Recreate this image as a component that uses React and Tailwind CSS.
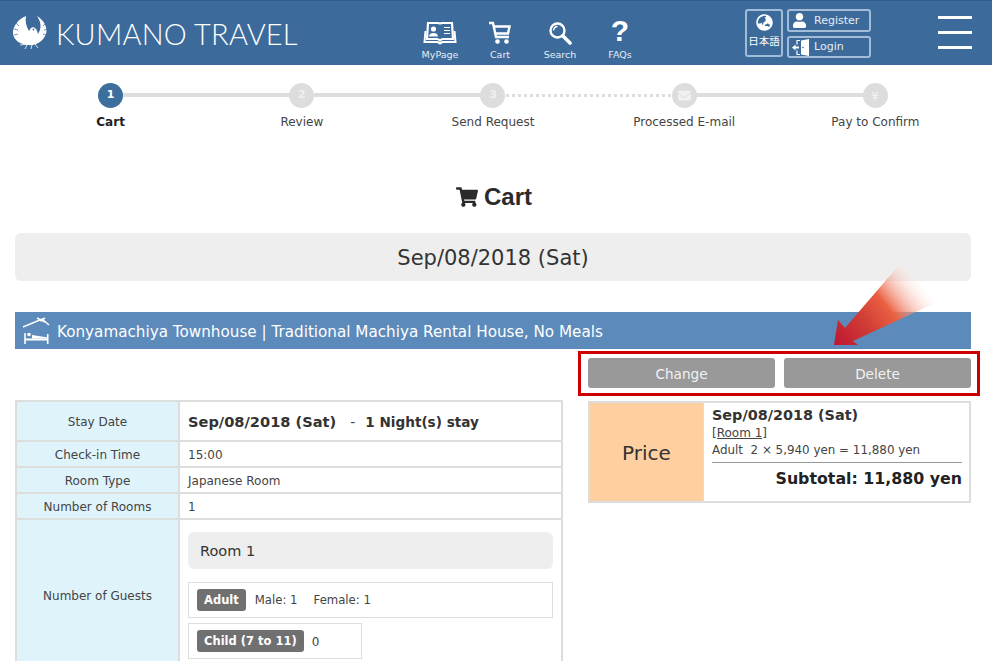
import React from 'react'
import { FaShoppingCart, FaEnvelope, FaYenSign, FaUser, FaGlobeAsia } from 'react-icons/fa'

function PhoenixLogo() {
  return (
    <svg width="36" height="36" viewBox="0 0 36 36" className="shrink-0">
      <path fill="#fff" d="M13 1C6 4 0 10 0 18C0 25 8 30 15 30C22 31 30 27 33 19C35 13 31 5 24 1C28 7 29 13 25 19C24 14 21 11 18 13L16 16C13 11 12 6 13 1z" />
      <path stroke="#3c6a9b" strokeWidth="0.7" fill="none" d="M3 8l3 3M1 14l4 1M1 20l4-1M33 8l-3 3M35 14l-4 1M34 20l-4-1" />
      <circle cx="20.500" cy="14.500" r="0.900" fill="#3c6a9b" />
      <path stroke="#fff" strokeWidth="0.800" fill="none" d="M7 30l8-1M14 30l-2 4M19 30l-1 4M22 29l3 4" />
    </svg>
  )
}

function BookIcon() {
  return (
    <svg width="34" height="24" viewBox="0 0 34 24">
      <path fill="none" stroke="#fff" strokeWidth="2.200" d="M5 2h10c1 0 2 .5 2 1.500c0-1 1-1.500 2-1.500h10l1 16H20c-1.500 0-2.500 1-3 1.500c-.5-.5-1.500-1.500-3-1.500H4z" />
      <path fill="none" stroke="#fff" strokeWidth="2" d="M2.500 10L1.500 21H14c1.500 0 2 1 3 1.500c1-.5 1.500-1.500 3-1.500h12.500L31.500 10" />
      <circle cx="10.500" cy="8" r="2.600" fill="#fff" />
      <path fill="#fff" d="M6 15.500c0-2.500 2-3.500 4.500-3.500s4.500 1 4.500 3.500z" />
      <path stroke="#fff" strokeWidth="1.200" d="M21 6.500h6M21 9.500h6M21 12.500h6" />
    </svg>
  )
}

function CartIcon() {
  return (
    <svg width="24" height="24" viewBox="0 0 24 24" fill="none">
      <path stroke="#fff" strokeWidth="2.400" d="M1 2h4l3 14h13" />
      <path stroke="#fff" strokeWidth="2.400" d="M6 5.500h15.500l-1.500 7H8" />
      <circle cx="9.500" cy="20.500" r="2.300" fill="#fff" />
      <circle cx="18.500" cy="20.500" r="2.300" fill="#fff" />
    </svg>
  )
}

function SearchIcon() {
  return (
    <svg width="24" height="24" viewBox="0 0 24 24" fill="none">
      <circle cx="9.500" cy="9.500" r="7" stroke="#fff" strokeWidth="2.400" />
      <path stroke="#fff" strokeWidth="1.500" d="M5.500 9.500a4 4 0 0 1 4-4" />
      <path stroke="#fff" strokeWidth="3.600" strokeLinecap="round" d="M15.500 15.500L22 22" />
    </svg>
  )
}

function NavItem({ icon, label }) {
  return (
    <div className="w-[60px] flex flex-col items-center text-white">
      <div className="h-[28px] flex items-end justify-center">{icon}</div>
      <span className="mt-[4px] text-[9.500px] leading-[11px] text-[#e6edf5]">{label}</span>
    </div>
  )
}

function DoorIcon() {
  return (
    <svg width="18" height="17" viewBox="0 0 18 17" fill="none">
      <path fill="#fff" d="M9 1.500L17 0v17l-8-1.500z" />
      <path stroke="#fff" strokeWidth="1.200" d="M8 1.500H5v4M5 11.500v4h3" />
      <path fill="#fff" d="M0 8.500l3.500-3v2H7v2H3.500v2z" />
      <circle cx="11" cy="8.500" r=".8" fill="#3c6a9b" />
    </svg>
  )
}

function Header() {
  return (
    <header className="h-[65px] bg-[#3c6a9b] border-t border-[#2f5c8c] flex items-center text-white">
      <div className="w-[405px] flex items-center pl-[13px]">
        <PhoenixLogo />
        <span className="ml-[7px] text-[29px] leading-none font-light tracking-[0.2px] whitespace-nowrap font-['Lato',sans-serif]">KUMANO TRAVEL</span>
      </div>
      <nav className="flex mt-[10px] ml-[5px]">
        <NavItem icon={<BookIcon />} label="MyPage" />
        <NavItem icon={<CartIcon />} label="Cart" />
        <NavItem icon={<SearchIcon />} label="Search" />
        <NavItem icon={<span className="text-[30px] leading-[28px] font-bold font-['Liberation_Sans',sans-serif]">?</span>} label="FAQs" />
      </nav>
      <div className="ml-[95px] flex gap-[4px] mt-[1px]">
        <div className="w-[38px] h-[48px] border-2 border-[#a3bdd8] rounded-[3px] flex flex-col items-center pt-[3px]">
          <FaGlobeAsia size={17} />
          <span className="mt-[3px] text-[10.500px] leading-[13px] font-['Noto_Sans_CJK_JP',sans-serif]">日本語</span>
        </div>
        <div className="w-[84px] flex flex-col gap-[4px]">
          <div className="h-[23px] border-2 border-[#a3bdd8] rounded-[3px] flex items-center pl-[3px] gap-[7px] text-[11px]">
            <FaUser size={15} /> <span className="pt-[2px] text-[#e6edf5]">Register</span>
          </div>
          <div className="h-[22px] border-2 border-[#a3bdd8] rounded-[3px] flex items-center pl-[3px] gap-[4px] text-[11px]">
            <DoorIcon /> <span className="pt-[1px] text-[#e6edf5]">Login</span>
          </div>
        </div>
      </div>
      <div className="ml-[67px] mb-[2px] w-[34px] flex flex-col gap-[12px]">
        <div className="h-[3px] bg-white" />
        <div className="h-[3px] bg-white" />
        <div className="h-[3px] bg-white" />
      </div>
    </header>
  )
}

const steps = [
  { label: 'Cart', mark: '1', active: true },
  { label: 'Review', mark: '2' },
  { label: 'Send Request', mark: '3', dotted: true },
  { label: 'Processed E-mail', mark: <FaEnvelope size={13} /> },
  { label: 'Pay to Confirm', mark: <FaYenSign size={10} />, last: true },
]

function Stepper() {
  return (
    <div className="grid grid-cols-5 ml-[15px] mr-[21px] pt-[18px] h-[100px]">
      {steps.map(s => (
        <div key={s.label} className="relative flex flex-col items-center">
          {!s.last && (s.dotted
            ? <div className="absolute top-[11px] left-1/2 w-full border-t-[3px] border-dotted border-[#dddddd]" />
            : <div className="absolute top-[10px] left-1/2 w-full h-[4px] bg-[#dddddd]" />)}
          <div className={`relative z-10 w-[25px] h-[25px] rounded-full flex items-center justify-center text-[11px] font-bold ${s.active ? 'bg-[#3c6f9e] text-white' : 'bg-[#dddddd] text-[#f0f0f0]'}`}>
            {s.mark}
          </div>
          <span className={`mt-[6px] text-[12px] leading-[16px] ${s.active ? 'font-bold text-[#222]' : 'text-[#444]'}`}>{s.label}</span>
        </div>
      ))}
    </div>
  )
}

function HouseIcon() {
  return (
    <svg width="28" height="30" viewBox="7 3 28 30" fill="none" className="shrink-0">
      <path stroke="#fff" strokeWidth="1.500" d="M8 14L27 6L34 12M22 5L30 9M30 5L25 8" />
      <path stroke="#fff" strokeWidth="1.600" d="M10 20V31M32.700 21V31" />
      <path fill="#fff" d="M10 25.500h22.700v2H10z" />
      <circle cx="14" cy="21.500" r="1.800" fill="#fff" />
      <path fill="#fff" d="M17 22l16 2.500v1H17z" />
    </svg>
  )
}

function Row({ label, children, big }) {
  return (
    <tr>
      <th className={`w-[163px] border-2 border-[#dddddd] bg-[#dff3fb] font-normal text-[12px] text-[#444] text-center align-middle ${big ? 'pt-[2px]' : 'pt-[1px]'}`}>{label}</th>
      <td className={`border-2 border-[#dddddd] px-[8px] text-[12px] text-[#444] align-middle ${big ? 'h-[40px] pt-[2px]' : 'h-[26px] pt-[1px]'}`}>{children}</td>
    </tr>
  )
}

function GuestBox({ tag, children, className }) {
  return (
    <div className={`border border-[#dddddd] h-[36px] flex items-center px-[8px] ${className}`}>
      <span className="bg-[#707070] rounded-[3px] text-white font-bold text-[11.500px] leading-[22px] px-[7px] whitespace-nowrap">{tag}</span>
      {children}
    </div>
  )
}

function StayTable() {
  return (
    <table className="w-[548px] border-collapse table-fixed">
      <tbody>
        <Row label="Stay Date" big>
          <span className="font-bold text-[14.600px] text-[#333] whitespace-nowrap">Sep/08/2018 (Sat)</span>
          <span className="ml-[14px] text-[14px]">-</span>
          <span className="ml-[10px] font-bold text-[13.600px] text-[#333] whitespace-nowrap">1 Night(s) stay</span>
        </Row>
        <Row label="Check-in Time">15:00</Row>
        <Row label="Room Type">Japanese Room</Row>
        <Row label="Number of Rooms">1</Row>
        <Row label="Number of Guests">
          <div className="pt-[11px] pb-[12px]">
            <div className="h-[37px] bg-[#eeeeee] rounded-[6px] flex items-center pl-[12px] pt-[3px] text-[14.500px] text-[#333]">Room 1</div>
            <GuestBox tag="Adult" className="mt-[13px]">
              <span className="ml-[9px] pt-[1px] whitespace-pre text-[11.700px]">Male: 1</span>
              <span className="ml-[16px] pt-[1px] whitespace-pre text-[11.700px]">Female: 1</span>
            </GuestBox>
            <GuestBox tag="Child (7 to 11)" className="mt-[5px] w-[174px]">
              <span className="ml-[8px] pt-[1px]">0</span>
            </GuestBox>
          </div>
        </Row>
      </tbody>
    </table>
  )
}

function PriceBox() {
  return (
    <div className="mt-[13px] h-[102px] border-2 border-[#dddddd] flex">
      <div className="w-[113px] bg-[#fdcfa1] flex items-center justify-center pt-[2px] text-[20px] text-[#333]">Price</div>
      <div className="flex-1 pl-[8px] pr-[7px] pt-[2px] border-l border-[#dddddd] text-[#444]">
        <p className="font-bold text-[14.400px] leading-[20px] text-[#333]">Sep/08/2018 (Sat)</p>
        <p className="mt-[1px] text-[12px] leading-[15px] underline">[Room 1]</p>
        <p className="text-[11.900px] leading-[18px] whitespace-pre">Adult  2 × 5,940 yen = 11,880 yen</p>
        <div className="mt-[3px] border-t border-[#999]" />
        <p className="mt-[4px] text-right font-bold text-[15.800px] leading-[24px] text-[#222]">Subtotal: 11,880 yen</p>
      </div>
    </div>
  )
}

function Arrow() {
  return (
    <svg width="110" height="95" viewBox="0 0 110 95" className="absolute left-[830px] top-[255px] pointer-events-none">
      <defs>
        <linearGradient id="arrowFill" x1="0" y1="90" x2="90" y2="20" gradientUnits="userSpaceOnUse">
          <stop offset="0" stopColor="#bd1230" />
          <stop offset="0.35" stopColor="#cf3b35" />
          <stop offset="0.6" stopColor="#ea5f41" />
          <stop offset="1" stopColor="#ffffff" stopOpacity="0" />
        </linearGradient>
      </defs>
      <path fill="url(#arrowFill)" d="M4 90L8 65L15 73L75 3L105 48L23 86L28 90z" />
    </svg>
  )
}

export default function App() {
  return (
    <div className="relative w-[992px] h-[661px] overflow-hidden bg-white font-['DejaVu_Sans',sans-serif]">
      <Header />
      <Stepper />
      <h1 className="mt-[17px] mr-[4px] flex items-center justify-center gap-[6px] text-[24px] leading-[30px] font-bold text-[#2b2b2b] font-['Liberation_Sans',sans-serif]">
        <FaShoppingCart size={22} /> Cart
      </h1>
      <div className="ml-[15px] mr-[21px] mt-[21px] h-[48px] rounded-[6px] bg-[#eeeeee] flex items-center justify-center pt-[4px] text-[21px] text-[#333]">
        Sep/08/2018 (Sat)
      </div>
      <div className="ml-[15px] mr-[21px] mt-[31px] h-[37px] bg-[#5c8aba] flex items-center pl-[7px] gap-[7px] text-white text-[15.200px]">
        <HouseIcon />
        <span className="pt-[3px] whitespace-nowrap">Konyamachiya Townhouse | Traditional Machiya Rental House, No Meals</span>
      </div>
      <div className="ml-[15px] mr-[21px] flex gap-[25px]">
        <div className="pt-[51px]">
          <StayTable />
        </div>
        <div className="flex-1 pt-[9px]">
          <div className="flex gap-[9px]">
            <button className="flex-1 h-[30px] pt-[2px] rounded-[3px] bg-[#999999] text-[#f2f2f2] text-[13.600px]">Change</button>
            <button className="flex-1 h-[30px] pt-[2px] rounded-[3px] bg-[#999999] text-[#f2f2f2] text-[13.600px]">Delete</button>
          </div>
          <PriceBox />
        </div>
      </div>
      <div className="absolute left-[578px] top-[351px] w-[402px] h-[45px] border-[3px] border-[#cc0000] pointer-events-none" />
      <Arrow />
    </div>
  )
}
